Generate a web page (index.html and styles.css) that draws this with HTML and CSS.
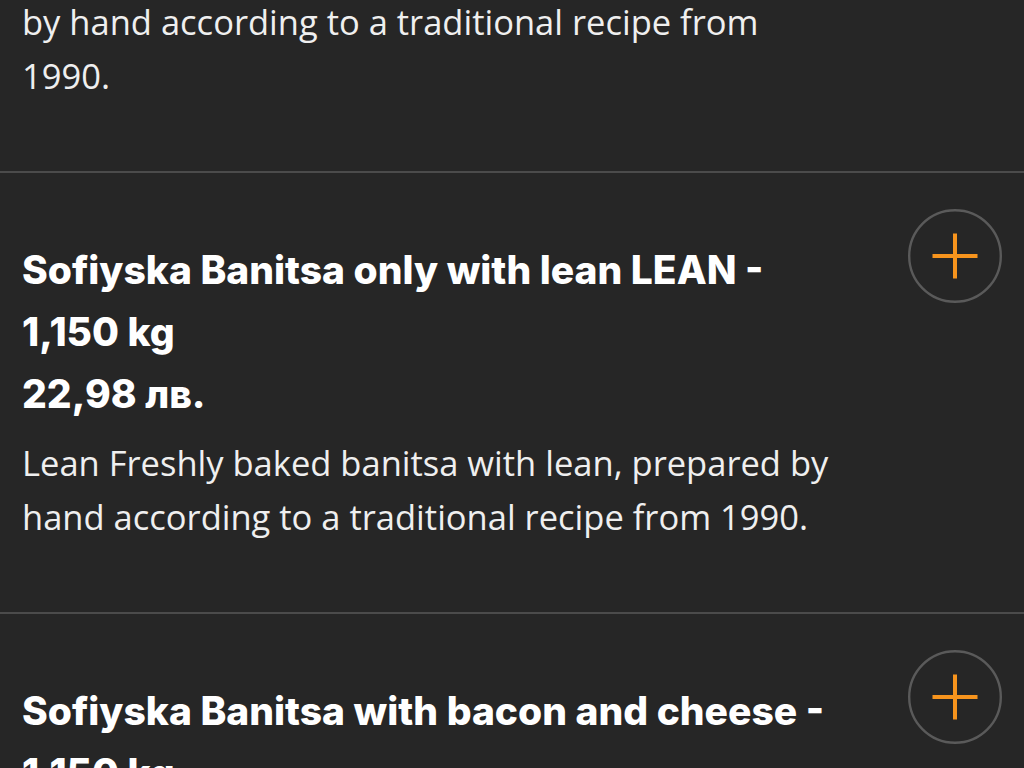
FILE: index.html
```html
<!DOCTYPE html>
<html lang="en">
<head>
<meta charset="utf-8">
<title>Menu</title>
<link rel="stylesheet" href="styles.css">
</head>
<body>
<main class="list">
  <section class="item item--cut">
    <div class="content">
      <p class="desc">by hand according to a traditional recipe from 1990.</p>
    </div>
  </section>
  <section class="item">
    <div class="content">
      <h2 class="title">Sofiyska Banitsa only with lean LEAN - 1,150&nbsp;kg</h2>
      <div class="price">22,98 лв.</div>
      <p class="desc">Lean Freshly baked banitsa with lean, prepared by hand according to a traditional recipe from 1990.</p>
    </div>
    <button class="add" aria-label="Add">
      <svg viewBox="0 0 94 94" width="94" height="94"><circle cx="47" cy="47" r="45.8" fill="none" stroke="#5a5a5a" stroke-width="2.4"/><path d="M24.5 47H69.5M47 24.5V69.5" stroke="#f7941d" stroke-width="4"/></svg>
    </button>
  </section>
  <section class="item">
    <div class="content">
      <h2 class="title">Sofiyska Banitsa with bacon and cheese - 1,150&nbsp;kg</h2>
      <div class="price">24,98 лв.</div>
      <p class="desc">Freshly baked banitsa with bacon and cheese, prepared by hand according to a traditional recipe from 1990.</p>
    </div>
    <button class="add" aria-label="Add">
      <svg viewBox="0 0 94 94" width="94" height="94"><circle cx="47" cy="47" r="45.8" fill="none" stroke="#5a5a5a" stroke-width="2.4"/><path d="M24.5 47H69.5M47 24.5V69.5" stroke="#f7941d" stroke-width="4"/></svg>
    </button>
  </section>
</main>
</body>
</html>
```
FILE: styles.css
```css
html, body {
  margin: 0;
  padding: 0;
  background: #262626;
  color: #ffffff;
  overflow: hidden;
  height: 768px;
}
.list {
  margin-top: -52px;
}
.item {
  display: flex;
  align-items: flex-start;
  gap: 66px;
  padding: 36px 22px 68px 22px;
  border-bottom: 2px solid #4b4b4b;
}
.item--cut {
  padding-right: 182px;
}
.content {
  flex: 1;
  min-width: 0;
  padding-top: 11px;
}
.title {
  margin: 19px 0 0;
  font-family: "Inter", sans-serif;
  font-weight: 800;
  font-size: 39px;
  line-height: 62px;
}
.price {
  font-family: "Inter", sans-serif;
  font-weight: 800;
  font-size: 39px;
  line-height: 62px;
}
.desc {
  margin: 0;
  font-family: "Open Sans", sans-serif;
  font-size: 34.5px;
  line-height: 54px;
  color: #efefef;
}
.price + .desc {
  margin-top: 11px;
}
.add {
  flex: none;
  width: 94px;
  height: 94px;
  padding: 0;
  border: 0;
  background: transparent;
}
.add svg {
  display: block;
}
```
